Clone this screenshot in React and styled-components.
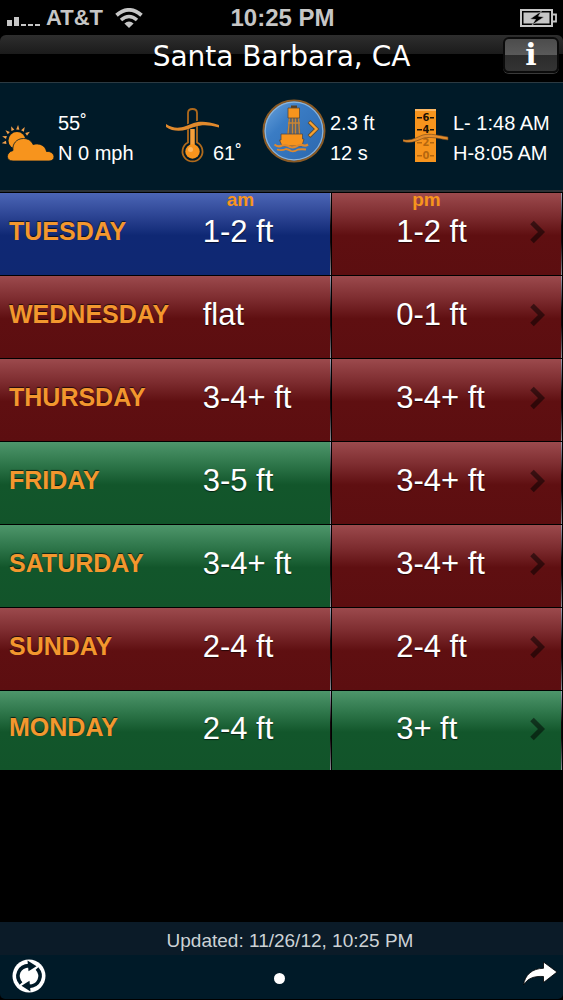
import React from "react";
import styled, { createGlobalStyle, css } from "styled-components";

const GlobalStyle = createGlobalStyle`
  * {
    box-sizing: border-box;
  }
  body {
    margin: 0;
    background: #000;
    color: #fff;
    font-family: "Liberation Sans", Arial, sans-serif;
  }
  button {
    padding: 0;
    border: 0;
    background: none;
    color: inherit;
    cursor: pointer;
  }
  svg {
    display: block;
  }
`;

const Screen = styled.div`
  display: flex;
  flex-direction: column;
  min-height: 100vh;
`;

const StatusBar = styled.div`
  display: grid;
  grid-template-columns: 1fr auto 1fr;
  align-items: center;
  height: 35px;
  padding: 0 5px 0 7px;
  color: #c6c6c6;
  font-size: 24px;
  font-weight: 700;
`;

const Carrier = styled.div`
  display: flex;
  align-items: center;
  gap: 5px;
  font-size: 22px;

  span {
    margin-right: 7px;
  }
`;

const Battery = styled.svg`
  justify-self: end;
`;

const NavBar = styled.header`
  display: grid;
  grid-template-columns: 60px 1fr 60px;
  align-items: start;
  height: 48px;
  padding-top: 2px;
  border-bottom: 1px solid #2c3a42;
  border-radius: 6px 6px 0 0;
  background: linear-gradient(#2e2e2e, #1b1b1b 19px, #000 19px);
`;

const Title = styled.h1`
  grid-column: 2;
  margin: 0;
  font-family: "DejaVu Sans", Verdana, sans-serif;
  font-size: 28px;
  font-weight: 400;
  line-height: 40px;
  text-align: center;
  white-space: nowrap;
`;

const InfoButton = styled.button`
  && {
    width: 56px;
    height: 36px;
    border: 2px solid #0b0b0b;
    border-radius: 6px;
    background: linear-gradient(#4c4c4c, #5a5a5a 50%, #2c2c2c 50%, #343434);
    box-shadow: 0 1px 0 #3a3a3a;
    font-family: "DejaVu Serif", serif;
    font-size: 30px;
    font-weight: 700;
    line-height: 32px;
  }
`;

const Conditions = styled.section`
  display: grid;
  grid-template-columns: 164fr 96fr 141fr 160fr;
  padding: 16px 0 22px 2px;
  border-bottom: 2px solid #2b3236;
  background: #001a28;
`;

const Condition = styled.div`
  display: flex;
  align-items: flex-end;
  gap: ${(props) => (props.$tight ? 0 : 4)}px;
  min-width: 0;

  svg {
    flex: none;
    margin-bottom: 5px;
    margin-right: ${(props) => (props.$tight ? -6 : 0)}px;
  }
`;

const BuoyButton = styled.button`
  flex: none;
`;

const Reading = styled.p`
  margin: 0;
  font-size: 20px;
  line-height: 30px;
  white-space: nowrap;
`;

const Forecast = styled.table`
  width: 100%;
  border-spacing: 0;
  table-layout: fixed;
`;

const ColumnHead = styled.th`
  position: relative;
  width: ${(props) => props.$width};
  height: 0;
  padding: 0;
`;

const Period = styled.span`
  position: absolute;
  top: 0;
  left: ${(props) => props.$left}px;
  color: #f7941d;
  font-size: 19px;
  line-height: 16px;
`;

const fills = {
  blue: "linear-gradient(#4c66b6, #2c4493 28%, #0f2874 52%, #0f2872)",
  red: "linear-gradient(#9c4a4d, #7d2c2f 28%, #5f0f11 52%, #5c0e10)",
  green: "linear-gradient(#4e966b, #2d7549 28%, #12562b 52%, #12542a)",
};

const cell = css`
  height: ${(props) => (props.$last ? 80 : 83)}px;
  border-top: 1px solid #000;
  text-align: left;
  white-space: nowrap;
`;

const Day = styled.th`
  ${cell}
  padding: 0 0 6px 9px;
  background: ${(props) => fills[props.$tone]};
  color: #f3972e;
  font-size: 25px;
  text-shadow: 0 -1px 1px rgba(0, 0, 0, 0.7);
`;

const Height = styled.td`
  ${cell}
  padding: 0 0 4px ${(props) => (props.$pm ? 64 : 0)}px;
  background: linear-gradient(#000, #000) right / 1px 100% no-repeat,
    linear-gradient(#a0a0b4, #14080c 40%, #14080c 60%, #8c8c96) right 1px top /
      1px 100% no-repeat,
    ${(props) => fills[props.$tone]};
  font-size: 31px;
  text-shadow: 0 1px 1px rgba(0, 0, 0, 0.6);
`;

const PmContent = styled.div`
  display: flex;
  align-items: center;
  justify-content: space-between;
  padding-right: 18px;
`;

const Footer = styled.footer`
  margin-top: auto;
  padding-bottom: 1px;
`;

const Updated = styled.p`
  margin: 0;
  padding: 5px 0 0 17px;
  background: #0b1b28;
  color: #ccd2d6;
  font-size: 19px;
  line-height: 28px;
  text-align: center;
`;

const Toolbar = styled.div`
  display: grid;
  grid-template-columns: 1fr auto 1fr;
  align-items: center;
  height: 44px;
  padding: 0 5px 2px 12px;
  border-radius: 0 0 5px 5px;
  background: #001a28;
`;

const PageDot = styled.span`
  width: 11px;
  height: 11px;
  margin: 4px 12px 0 0;
  border-radius: 50%;
  background: #fff;
`;

const ShareButton = styled.button`
  && {
    justify-self: end;
    padding-bottom: 5px;
  }
`;

const SignalIcon = () => (
  <svg width="34" height="18" viewBox="0 0 34 18" fill="#c6c6c6">
    <rect x="0" y="11" width="5" height="6" />
    <rect x="7" y="8" width="5" height="9" />
    <rect x="14" y="15" width="5" height="2" />
    <rect x="21" y="15" width="5" height="2" />
    <rect x="28" y="15" width="5" height="2" />
  </svg>
);

const WifiIcon = () => (
  <svg width="28" height="20" viewBox="0 0 28 20" fill="none" stroke="#c6c6c6">
    <path d="M1.5 7.3 Q14 -3.5 26.5 7.3" strokeWidth="3.8" />
    <path d="M6 12 Q14 5 22 12" strokeWidth="3.6" />
    <path d="M14 20 L9.4 15.6 Q14 11.4 18.6 15.6Z" fill="#c6c6c6" stroke="none" />
  </svg>
);

const BatteryIcon = () => (
  <Battery width="38" height="18" viewBox="0 0 38 18">
    <rect x="1" y="1" width="31" height="16" fill="none" stroke="#c6c6c6" strokeWidth="2" />
    <rect x="3.5" y="3.5" width="26" height="11" fill="#c6c6c6" />
    <path d="M33 5.5 h3 v7 h-3" fill="none" stroke="#c6c6c6" strokeWidth="1.8" />
    <path
      d="M21.5 2 L10 10 L15.5 10.5 L12 16 L24 8 L18.5 7.2Z"
      fill="#000"
      stroke="#c6c6c6"
      strokeWidth="0.6"
    />
  </Battery>
);

const SunCloudIcon = () => (
  <svg width="52" height="38" viewBox="0 0 52 38">
    <g fill="#f4a04a">
      {[-100, -74, -48, -22, 4, 30, 56].map((angle) => (
        <path key={angle} d="M13.4 4.5 L15 0 L16.6 4.5Z" transform={`rotate(${angle} 15 15.5)`} />
      ))}
      <circle cx="15" cy="15.5" r="8.5" fill="#f7941d" />
    </g>
    <path
      d="M11 36 C3.5 36 3.5 27.5 11 25.5 C10 19 14.5 13.5 21.5 13.5 C26.5 13.5 29.5 16 31 19.5 C37 17.5 43.5 20.5 44.5 26.5 C49 26 52 29 52 31.8 C52 34.5 50 36 47 36Z"
      fill="#f7941d"
      stroke="#001a28"
      strokeWidth="0.8"
    />
  </svg>
);

const ThermometerIcon = () => (
  <svg width="53" height="55" viewBox="0 0 53 55" fill="none">
    <path
      d="M22 34.5 V5 Q22 1 26.5 1 Q31 1 31 5 V34.5 A10 10 0 1 1 22 34.5Z"
      stroke="#b06a1c"
      strokeWidth="1.8"
    />
    <path d="M26.5 21 V40" stroke="#f7a03a" strokeWidth="4.5" />
    <circle cx="26.5" cy="43.5" r="7.2" fill="#f7941d" />
    <circle cx="24.5" cy="41.5" r="2.5" fill="#fbb660" />
    <path
      d="M0 17 C6 22 13 22.5 20 19.5 C28 16 33 12.5 53 18.5"
      stroke="#001a28"
      strokeWidth="5"
    />
    <path
      d="M0 16 C7 20.5 13 20.5 20 18 C29 14.5 35 11 53 17 V19.5 C36 14.5 30 18.5 21 21.5 C13 24 6 23 0 19Z"
      fill="#e0892c"
    />
  </svg>
);

const BuoyIcon = () => (
  <svg width="64" height="64" viewBox="0 0 64 64">
    <defs>
      <linearGradient id="sea" x1="0" y1="0" x2="1" y2="1">
        <stop offset="0" stopColor="#6ea6de" />
        <stop offset="0.35" stopColor="#3a7cc4" />
        <stop offset="1" stopColor="#2a66ad" />
      </linearGradient>
    </defs>
    <circle cx="32" cy="32" r="30.5" fill="url(#sea)" stroke="#8a5a24" strokeWidth="2" />
    <circle cx="32" cy="32" r="28.8" fill="none" stroke="#8fb4d6" strokeWidth="1.2" />
    <path d="M29 9 V6.5 H35 V9" fill="#5a3f20" />
    <path d="M27 19 H37 L38.5 35 H25Z" fill="#5a6470" />
    <path
      d="M27.5 19 L26 35 M30.5 19 V35 M33.5 19 V35 M36.5 19 L37.5 35 M26 24 H38"
      stroke="#c98533"
      strokeWidth="1.3"
    />
    <path d="M26 9 H37.5 V19 H26Z" fill="#f7941d" stroke="#5a4a38" strokeWidth="0.8" />
    <path
      d="M19 35 H40.5 V40 H42 L40 47 H20 L17.5 41 H19Z"
      fill="#f7941d"
      stroke="#4a4a50"
      strokeWidth="0.8"
    />
    <path
      d="M12.5 45.5 Q16 48.5 20 46.5 Q25 45.5 28 48 Q31 49 34 47.5 Q38 45 42 46.5 Q44 47 46 45.5"
      fill="none"
      stroke="#e0892c"
      strokeWidth="2.2"
    />
    <path
      d="M15 50.5 Q20 52 24 50 Q27 50.5 29 52 Q32 53 36 50.5 Q40 50 44 50.5"
      fill="none"
      stroke="#e0892c"
      strokeWidth="1.8"
    />
    <path d="M47 22.5 L54.5 30 L47 37.5" fill="none" stroke="#5b4c38" strokeWidth="4" />
    <path d="M47.5 23 L54.5 30 L47.5 37" fill="none" stroke="#f7a12e" strokeWidth="2.4" />
  </svg>
);

const marks = [
  { label: "6", y: 12, color: "#1c1206" },
  { label: "4", y: 24, color: "#1c1206" },
  { label: "2", y: 37, color: "#b5670f" },
  { label: "0", y: 50, color: "#b5670f" },
];

const TideIcon = () => (
  <svg width="46" height="54" viewBox="0 0 46 54">
    <rect x="12" y="0" width="21" height="53" fill="#f7941d" />
    <rect x="12" y="0" width="21" height="2" fill="#fbb765" />
    {marks.map(({ label, y, color }) => (
      <g key={label} fill={color}>
        <rect x="14" y={y - 4} width="5" height="1.5" />
        <rect x="27" y={y - 4} width="4" height="1.5" />
        <text
          x="23"
          y={y}
          fontSize="10"
          fontWeight="700"
          fontFamily="DejaVu Sans, sans-serif"
          textAnchor="middle"
        >
          {label}
        </text>
      </g>
    ))}
    <path
      d="M0 30.5 C8 32.5 14 28 20 26 C28 24 35 26.5 45 28 V31 C35 29.5 28 27.5 21 29 C14 31.5 9 35 0 32.5Z"
      fill="#e58d2c"
      stroke="#6b451c"
      strokeWidth="0.6"
    />
  </svg>
);

const ChevronIcon = () => (
  <svg width="15" height="24" viewBox="0 0 15 24" fill="none">
    <path d="M2 2.5 L11.5 12 L2 21.5" stroke="#000" strokeOpacity="0.5" strokeWidth="5" />
  </svg>
);

const RefreshIcon = () => (
  <svg width="34" height="34" viewBox="0 0 34 34">
    <circle cx="17" cy="17" r="16.5" fill="#fff" />
    {[0, 180].map((angle) => (
      <g key={angle} transform={`rotate(${angle} 17 17)`}>
        <path d="M9 24.5 C2.5 17 7 7 17 6.6" fill="none" stroke="#001a28" strokeWidth="3.6" />
        <path d="M15.5 1.5 L24.5 7.2 L16.5 12.2Z" fill="#001a28" />
      </g>
    ))}
  </svg>
);

const ShareIcon = () => (
  <svg width="36" height="26" viewBox="0 0 36 26">
    <path
      d="M1.5 24 C3 14 10 7.5 21.5 7.3 V1 L35 11 L21.5 21.5 V15.5 C12 15 6 17 1.5 24Z"
      fill="#fff"
      stroke="#000"
      strokeWidth="0.8"
    />
  </svg>
);

const days = [
  { day: "TUESDAY", am: "1-2 ft", pm: "1-2 ft", amTone: "blue", pmTone: "red" },
  { day: "WEDNESDAY", am: "flat", pm: "0-1 ft", amTone: "red", pmTone: "red" },
  { day: "THURSDAY", am: "3-4+ ft", pm: "3-4+ ft", amTone: "red", pmTone: "red" },
  { day: "FRIDAY", am: "3-5 ft", pm: "3-4+ ft", amTone: "green", pmTone: "red" },
  { day: "SATURDAY", am: "3-4+ ft", pm: "3-4+ ft", amTone: "green", pmTone: "red" },
  { day: "SUNDAY", am: "2-4 ft", pm: "2-4 ft", amTone: "red", pmTone: "red" },
  { day: "MONDAY", am: "2-4 ft", pm: "3+ ft", amTone: "green", pmTone: "green" },
];

const ForecastRow = ({ day, am, pm, amTone, pmTone, last }) => {
  return (
    <tr>
      <Day scope="row" $tone={amTone} $last={last}>
        {day}
      </Day>
      <Height $tone={amTone} $last={last}>
        {am}
      </Height>
      <Height $pm $tone={pmTone} $last={last}>
        <PmContent>
          {pm}
          <button type="button" aria-label={day}>
            <ChevronIcon />
          </button>
        </PmContent>
      </Height>
    </tr>
  );
};

const App = () => {
  return (
    <Screen>
      <GlobalStyle />
      <StatusBar>
        <Carrier>
          <SignalIcon />
          <span>AT&amp;T</span>
          <WifiIcon />
        </Carrier>
        <div>10:25 PM</div>
        <BatteryIcon />
      </StatusBar>
      <NavBar>
        <Title>Santa Barbara, CA</Title>
        <InfoButton type="button">i</InfoButton>
      </NavBar>
      <Conditions>
        <Condition>
          <SunCloudIcon />
          <Reading>
            55˚
            <br />N 0 mph
          </Reading>
        </Condition>
        <Condition $tight>
          <ThermometerIcon />
          <Reading>61˚</Reading>
        </Condition>
        <Condition>
          <BuoyButton type="button" aria-label="Buoy">
            <BuoyIcon />
          </BuoyButton>
          <Reading>
            2.3 ft
            <br />
            12 s
          </Reading>
        </Condition>
        <Condition>
          <TideIcon />
          <Reading>
            L- 1:48 AM
            <br />
            H-8:05 AM
          </Reading>
        </Condition>
      </Conditions>
      <Forecast>
        <thead>
          <tr>
            <ColumnHead $width="36%" />
            <ColumnHead scope="col" $width="23%">
              <Period $left={24}>am</Period>
            </ColumnHead>
            <ColumnHead scope="col" $width="41%">
              <Period $left={80}>pm</Period>
            </ColumnHead>
          </tr>
        </thead>
        <tbody>
          {days.map((item, index) => (
            <ForecastRow key={item.day} {...item} last={index === days.length - 1} />
          ))}
        </tbody>
      </Forecast>
      <Footer>
        <Updated>Updated: 11/26/12, 10:25 PM</Updated>
        <Toolbar>
          <button type="button" aria-label="Refresh">
            <RefreshIcon />
          </button>
          <PageDot />
          <ShareButton type="button" aria-label="Share">
            <ShareIcon />
          </ShareButton>
        </Toolbar>
      </Footer>
    </Screen>
  );
};

export default App;
